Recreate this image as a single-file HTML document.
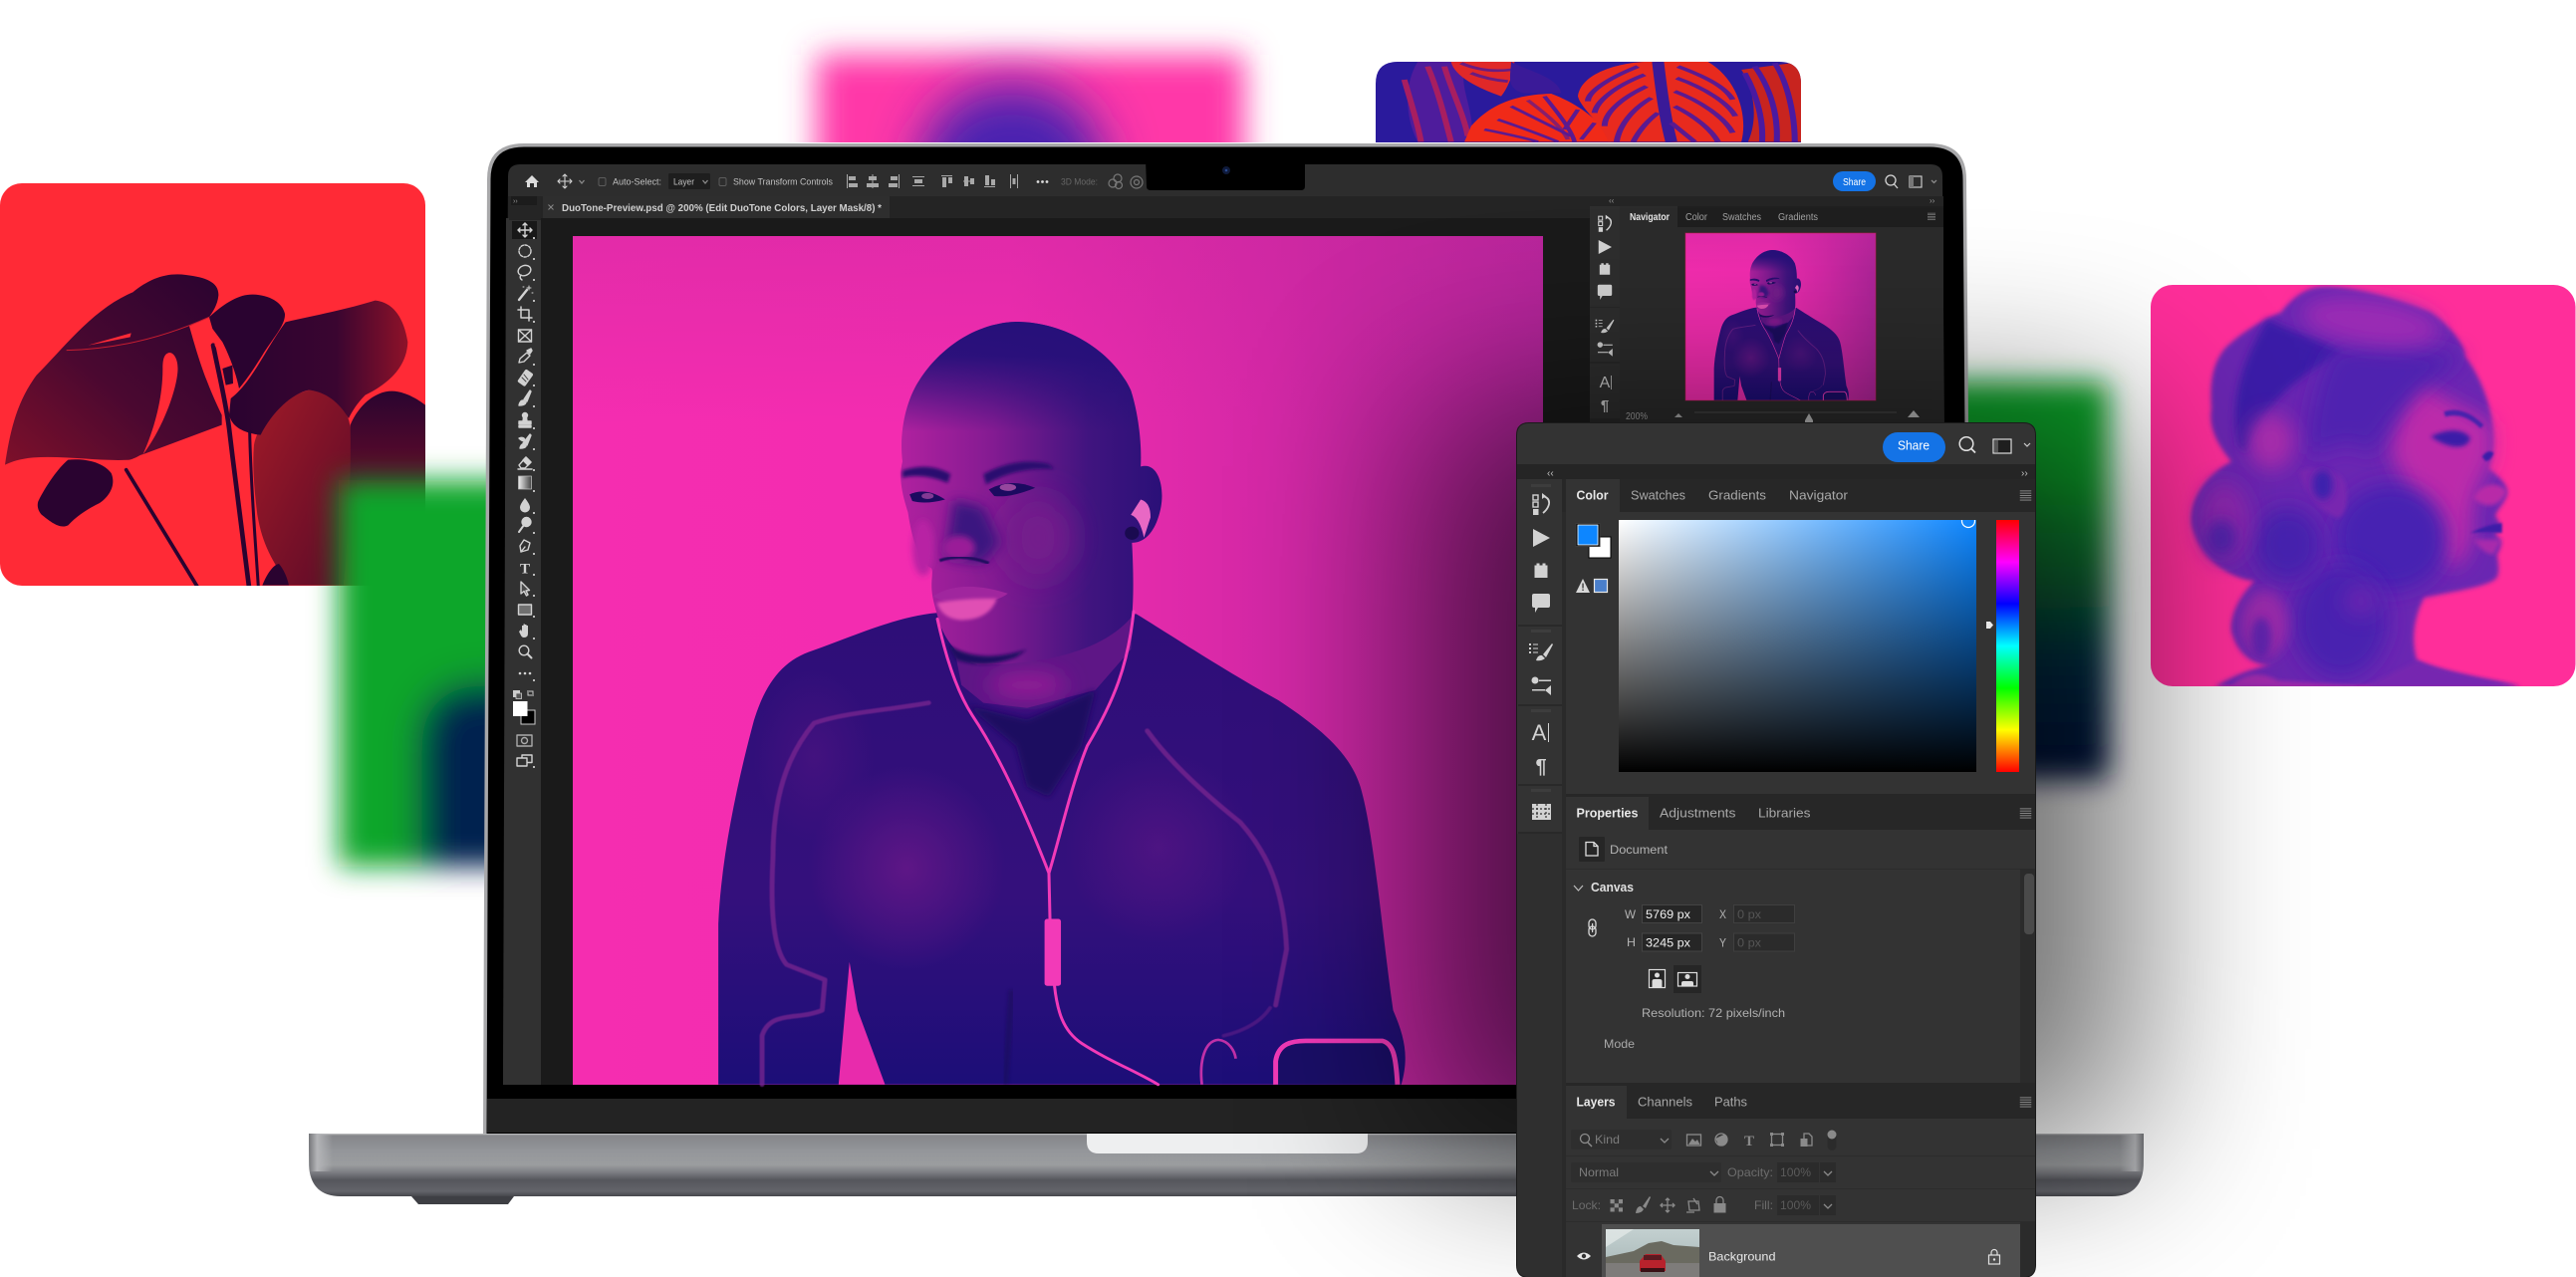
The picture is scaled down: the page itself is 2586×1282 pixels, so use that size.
<!DOCTYPE html>
<html lang="en">
<head>
<meta charset="utf-8">
<title>Photoshop Duotone</title>
<style>
html,body{margin:0;padding:0;background:#fff;width:2586px;height:1282px;overflow:hidden}
svg{display:block;position:absolute;left:0;top:0}
text{font-family:"Liberation Sans",sans-serif}
.i{fill:none;stroke:#d2d2d2;stroke-width:1.4;stroke-linecap:round;stroke-linejoin:round}
.f{fill:#d2d2d2;stroke:none}
.d{fill:none;stroke:#8a8a8a;stroke-width:1.3}
.df{fill:#8a8a8a;stroke:none}
</style>
</head>
<body>
<svg width="2586" height="1282" viewBox="0 0 2586 1282" xmlns="http://www.w3.org/2000/svg">
<defs>
<filter id="b1" x="-5%" y="-5%" width="110%" height="110%"><feGaussianBlur stdDeviation="1"/></filter>
<filter id="b3" x="-20%" y="-20%" width="140%" height="140%"><feGaussianBlur stdDeviation="3"/></filter>
<filter id="b6" x="-30%" y="-30%" width="160%" height="160%"><feGaussianBlur stdDeviation="6"/></filter>
<filter id="b12" x="-50%" y="-50%" width="200%" height="200%"><feGaussianBlur stdDeviation="12"/></filter>
<filter id="b20" x="-60%" y="-60%" width="220%" height="220%"><feGaussianBlur stdDeviation="20"/></filter>
<filter id="b30" x="-80%" y="-80%" width="260%" height="260%"><feGaussianBlur stdDeviation="30"/></filter>
<filter id="bc" x="-30%" y="-30%" width="160%" height="160%"><feGaussianBlur stdDeviation="14"/></filter>
<filter id="bt" x="-30%" y="-60%" width="160%" height="220%"><feGaussianBlur stdDeviation="16"/></filter>
<filter id="bd" x="-60%" y="-60%" width="220%" height="220%"><feGaussianBlur stdDeviation="25"/></filter>
<filter id="bs" x="-50%" y="-50%" width="200%" height="200%"><feGaussianBlur stdDeviation="90"/></filter>

<clipPath id="cRed"><rect x="0" y="184" width="427" height="404" rx="22"/></clipPath>
<clipPath id="cWoman"><rect x="2159" y="286" width="426.5" height="403" rx="22"/></clipPath>
<clipPath id="cPlant"><path d="M1381,143V84Q1381,62 1403,62H1786Q1808,62 1808,84V143Z"/></clipPath>
<clipPath id="cPink"><rect x="700" y="0" width="700" height="143"/></clipPath>
<clipPath id="cPick"><rect x="1625" y="522" width="359" height="253"/></clipPath>
<clipPath id="cThumb"><rect x="1612" y="1234" width="94" height="48"/></clipPath>
<clipPath id="cPanel"><path d="M1523,437Q1523,425 1535,425H2031Q2043,425 2043,437V1270Q2043,1282 2031,1282H1535Q1523,1282 1523,1270Z"/></clipPath>
<clipPath id="cGL"><rect x="340" y="482" width="360" height="388"/></clipPath>

<linearGradient id="gGR" x1="0" y1="0" x2="0" y2="1">
<stop offset="0" stop-color="#0AA52A"/><stop offset=".25" stop-color="#0AA02A"/><stop offset=".5" stop-color="#0A6A35"/><stop offset=".7" stop-color="#003048"/><stop offset="1" stop-color="#001040"/></linearGradient>
<linearGradient id="gBase" x1="0" y1="0" x2="0" y2="1">
<stop offset="0" stop-color="#c8c8ca"/><stop offset=".03" stop-color="#85868a"/><stop offset=".28" stop-color="#94969a"/><stop offset=".5" stop-color="#9b9d9f"/><stop offset=".62" stop-color="#7c7d82"/><stop offset=".74" stop-color="#55565c"/><stop offset=".92" stop-color="#63646a"/><stop offset="1" stop-color="#46474c"/></linearGradient>
<linearGradient id="gEndL" x1="0" y1="0" x2="1" y2="0">
<stop offset="0" stop-color="#75767a"/><stop offset=".35" stop-color="#b4b5b8"/><stop offset="1" stop-color="#b4b5b8" stop-opacity="0"/></linearGradient>
<linearGradient id="gEndR" x1="1" y1="0" x2="0" y2="0">
<stop offset="0" stop-color="#75767a"/><stop offset=".35" stop-color="#b4b5b8"/><stop offset="1" stop-color="#b4b5b8" stop-opacity="0"/></linearGradient>

<linearGradient id="gCanvas" x1="0" y1="0" x2="1" y2="0">
<stop offset="0" stop-color="#F52DB0"/><stop offset=".45" stop-color="#F22CB0"/><stop offset=".72" stop-color="#D428A6"/><stop offset="1" stop-color="#AE2499"/></linearGradient>
<linearGradient id="gCanvasTop" x1="0" y1="0" x2="0" y2="1">
<stop offset="0" stop-color="#C8289E" stop-opacity=".4"/><stop offset=".22" stop-color="#C8289E" stop-opacity="0"/></linearGradient>
<linearGradient id="gBody" x1="0" y1="0" x2="0" y2="1">
<stop offset="0" stop-color="#2E0E78"/><stop offset=".6" stop-color="#34107C"/><stop offset="1" stop-color="#1C0E78"/></linearGradient>
<linearGradient id="gHead" x1="0" y1="0" x2="1" y2="0">
<stop offset="0" stop-color="#B0219F"/><stop offset=".35" stop-color="#841B92"/><stop offset=".72" stop-color="#40147F"/><stop offset="1" stop-color="#2A1078"/></linearGradient>
<linearGradient id="gCap" x1="0" y1="0" x2="0" y2="1">
<stop offset="0" stop-color="#26107A"/><stop offset=".1" stop-color="#26107A" stop-opacity=".95"/><stop offset=".2" stop-color="#26107A" stop-opacity=".55"/><stop offset=".32" stop-color="#26107A" stop-opacity="0"/></linearGradient>
<radialGradient id="gChest" cx=".5" cy=".5" r=".5">
<stop offset="0" stop-color="#5E1686"/><stop offset="1" stop-color="#5E1686" stop-opacity="0"/></radialGradient>

<linearGradient id="gLeafR" x1="0" y1="0" x2="1" y2="0">
<stop offset="0" stop-color="#2A0330"/><stop offset=".6" stop-color="#3a0530"/><stop offset="1" stop-color="#8E1229"/></linearGradient>
<linearGradient id="gLeafM" x1="1" y1="0" x2="0" y2="1">
<stop offset="0" stop-color="#2A0330"/><stop offset=".55" stop-color="#4a0830"/><stop offset="1" stop-color="#7E102A"/></linearGradient>
<linearGradient id="gLeafB" x1="0" y1="0" x2="1" y2="1">
<stop offset="0" stop-color="#A01A28"/><stop offset="1" stop-color="#5a0a28"/></linearGradient>
<linearGradient id="gLeaf5" x1="0" y1="0" x2="0" y2="1">
<stop offset="0" stop-color="#2A0430"/><stop offset=".4" stop-color="#5a0a2a"/><stop offset="1" stop-color="#7a1028"/></linearGradient>

<linearGradient id="gPickH" x1="0" y1="0" x2="1" y2="0"><stop offset="0" stop-color="#fff"/><stop offset="1" stop-color="#0D86FF"/></linearGradient>
<linearGradient id="gPickV" x1="0" y1="0" x2="0" y2="1"><stop offset="0" stop-color="#000" stop-opacity="0"/><stop offset="1" stop-color="#000"/></linearGradient>
<linearGradient id="gHue" x1="0" y1="0" x2="0" y2="1">
<stop offset="0" stop-color="#f00"/><stop offset=".167" stop-color="#f0f"/><stop offset=".333" stop-color="#00f"/><stop offset=".5" stop-color="#0ff"/><stop offset=".667" stop-color="#0f0"/><stop offset=".833" stop-color="#ff0"/><stop offset="1" stop-color="#f00"/></linearGradient>
<linearGradient id="gGrad" x1="0" y1="0" x2="1" y2="0"><stop offset="0" stop-color="#eee"/><stop offset="1" stop-color="#444"/></linearGradient>
<linearGradient id="gSky" x1="0" y1="0" x2="0" y2="1"><stop offset="0" stop-color="#c3d0d0"/><stop offset="1" stop-color="#a5b4b4"/></linearGradient>

<g id="manArt">
  <rect x="575" y="237" width="974" height="852" fill="url(#gCanvas)"/>
  <rect x="575" y="237" width="974" height="852" fill="url(#gCanvasTop)"/>
  <g transform="translate(680,300) scale(.5485,.5102)">
    <path fill="url(#gBody)" d="M75,1546L75,1230C80,1100 110,950 140,830C160,760 190,715 240,695C320,665 400,625 475,618L540,720L830,620L840,620C900,660 1000,730 1100,790C1170,840 1230,890 1250,960C1275,1050 1290,1250 1310,1400C1330,1450 1340,1490 1325,1546Z"/>
    <ellipse cx="420" cy="1120" rx="180" ry="200" fill="url(#gChest)"/>
    <ellipse cx="880" cy="1080" rx="170" ry="190" fill="url(#gChest)" opacity=".6"/>
    <ellipse cx="250" cy="900" rx="110" ry="170" fill="url(#gChest)" opacity=".4"/>
    <path d="M315,1305L330,1400L380,1546L295,1546Z" fill="#E82BAC"/>
    <path d="M500,650L835,620L830,690L765,770L640,805L560,795L520,760Z" fill="#5E1686"/>
    <ellipse cx="640" cy="760" rx="70" ry="30" fill="#8E1C94" filter="url(#b20)"/>
    <path d="M530,800L640,828L765,770L740,880L680,980L640,960L620,880Z" fill="#1E0C60" filter="url(#b6)"/>
    <path fill="url(#gHead)" d="M470,600C460,560 470,540 465,530C445,520 430,480 422,420C410,380 405,350 412,320C405,260 420,200 440,165C480,95 550,45 625,45C720,48 800,110 830,180C845,230 850,290 848,330C880,320 892,370 885,410C878,450 860,480 832,480C835,540 835,590 832,625C790,680 700,720 550,720C520,710 495,680 480,640Z"/>
    <path fill="url(#gCap)" d="M470,600C460,560 470,540 465,530C445,520 430,480 422,420C410,380 405,350 412,320C405,260 420,200 440,165C480,95 550,45 625,45C720,48 800,110 830,180C845,230 850,290 848,330C880,320 892,370 885,410C878,450 860,480 832,480C835,540 835,590 832,625C790,680 700,720 550,720C520,710 495,680 480,640Z"/>
    <ellipse cx="660" cy="470" rx="60" ry="80" fill="#741A8C" filter="url(#b30)"/>
    <ellipse cx="450" cy="490" rx="20" ry="55" fill="#B823A4" filter="url(#b6)"/>
    <path d="M505,395L560,410L590,480L560,520L490,510Z" fill="#3A1280" filter="url(#b12)"/>
    <ellipse cx="515" cy="490" rx="30" ry="24" fill="#9A1E98" filter="url(#b6)"/>
    <path d="M480,515Q520,500 570,520" stroke="#200A60" stroke-width="6" fill="none" filter="url(#b1)"/>
    <path d="M412,338Q460,320 500,345L495,362Q450,342 412,352Z" fill="#2A0E70" filter="url(#b3)"/>
    <path d="M560,345Q620,310 680,325L690,335Q620,330 565,365Z" fill="#2A0E70" filter="url(#b3)"/>
    <path d="M425,385Q455,370 490,395Q455,405 430,398Z" fill="#1C0A60"/>
    <ellipse cx="458" cy="388" rx="11" ry="6" fill="#D860C0" opacity=".55"/>
    <path d="M570,375Q610,352 655,372Q610,392 580,388Z" fill="#1C0A60"/>
    <ellipse cx="605" cy="371" rx="15" ry="7" fill="#E870C8" opacity=".6"/>
    <path d="M468,585Q520,550 605,580Q580,600 530,598Q490,600 468,585Z" fill="#A0269E"/>
    <path d="M475,598Q530,588 585,590Q570,632 520,632Q485,630 475,598Z" fill="#E04FB4" filter="url(#b3)"/>
    <path d="M495,680Q550,720 640,690L620,705Q560,730 510,710Z" fill="#1E0A60" filter="url(#b3)"/>
    <path d="M848,395Q866,400 866,430L854,470Q846,430 830,425Z" fill="#E868C4"/>
    <circle cx="832" cy="461" r="13" fill="#1A0A50"/>
    <g fill="none" stroke="#7A2690" stroke-width="9" stroke-linecap="round" stroke-linejoin="round" opacity=".75" filter="url(#b1)">
      <path d="M460,795C380,810 300,815 250,835C200,900 175,980 175,1100C170,1200 175,1280 200,1310L270,1340L265,1400C220,1420 170,1400 155,1450L155,1546"/>
      <path d="M860,850C900,910 960,970 1030,1030C1080,1090 1110,1160 1115,1280L1095,1390"/>
      <path d="M1000,1450C1040,1440 1070,1420 1085,1395" stroke-width="7" opacity=".6"/>
    </g>
    <g fill="none" stroke="#F23AB8" stroke-width="5.500" stroke-linecap="round" stroke-linejoin="round">
      <path d="M476,630C490,700 510,770 540,820C590,900 640,1020 680,1130"/>
      <path d="M835,615C825,720 800,790 750,880C720,960 700,1060 680,1130L682,1225"/>
      <path d="M690,1350C695,1400 705,1440 740,1465C790,1500 840,1520 880,1546"/>
    </g>
    <rect x="672" y="1220" width="30" height="132" rx="5" fill="#F23AB8"/>
    <path d="M1095,1546L1095,1500C1100,1465 1125,1460 1150,1460L1290,1460C1310,1465 1315,1490 1318,1546Z" fill="#1A0E68"/>
    <path d="M1095,1546L1095,1500C1100,1465 1125,1460 1150,1460L1290,1460C1310,1465 1315,1490 1318,1546" fill="none" stroke="#F23AB8" stroke-width="9"/>
    <path d="M960,1546C955,1500 965,1460 990,1458C1010,1460 1020,1480 1022,1495" fill="none" stroke="#C030A8" stroke-width="5"/>
    <path d="M600,1546L612,1360" fill="none" stroke="#12084e" stroke-width="12" opacity=".4" filter="url(#b3)"/>
  </g>
</g>

<g id="ih"><rect x="-8" y="-10" width="5" height="5" fill="none" stroke="#d2d2d2" stroke-width="1.4"/><rect x="-8" y="-3" width="5" height="5" fill="none" stroke="#d2d2d2" stroke-width="1.4"/><rect x="-8" y="4" width="5.500" height="6" fill="#d2d2d2"/><path d="M2,-9Q9,-7 8,-1Q7,4 2,8" fill="none" stroke="#d2d2d2" stroke-width="1.800"/><path d="M1,-12L1,-6L5,-9Z" fill="#d2d2d2"/></g>
<g id="ip"><path d="M-8,-9L9,0L-8,9Z" fill="#d2d2d2"/></g>
<g id="il"><path d="M-6.500,-3V-6.500H-4.500V-8.500H-1.500V-6.500H1.500V-8.500H4.500V-6.500H6.500V6H-6.500Z" fill="#d2d2d2"/></g>
<g id="ic"><path d="M-9,-7Q-9,-9 -7,-9H7Q9,-9 9,-7V3Q9,5 7,5H-3L-6,10L-6,5H-7Q-9,5 -9,3Z" fill="#d2d2d2"/></g>
<g id="ib"><path d="M2,3L11,-8L12,-7L5,6Z" fill="#d2d2d2"/><path d="M-5,9Q-3,3 1,4L4,7Q0,10 -5,9Z" fill="#d2d2d2"/><path d="M-12,-8h2v2h-2zM-12,-4h2v2h-2zM-12,0h2v2h-2zM-8,-7.500h5v1h-5zM-8,-3.500h5v1h-5zM-8,.5h5v1h-5z" fill="#d2d2d2"/></g>
<g id="is"><circle cx="-6" cy="-5" r="3.500" fill="#d2d2d2"/><path d="M-2,-5.500H10V-4H-2ZM-9,4H4V5.500H-9Z" fill="#d2d2d2"/><path d="M4,5L10,0V10Z" fill="#d2d2d2"/></g>
<g id="ih2" fill="#8e8e8e"><rect x="-5" y="-4" width="10" height=".8"/><rect x="-5" y="-2" width="10" height=".8"/><rect x="-5" y="0" width="10" height=".8"/><rect x="-5" y="2" width="10" height=".8"/><rect x="-5" y="4" width="10" height=".8"/></g>
</defs>

<rect width="2586" height="1282" fill="#fff"/>

<!-- blurred pink card top -->
<g clip-path="url(#cPink)">
  <rect x="820" y="55" width="429" height="170" fill="#FF38A8" filter="url(#bt)"/>
  <ellipse cx="1016" cy="165" rx="92" ry="80" fill="#4A22B0" filter="url(#bd)"/>
</g>
<!-- plant card top -->
<g clip-path="url(#cPlant)">
  <rect x="1381" y="62" width="427" height="82" fill="#2A1A9C"/>
  <g transform="translate(780,30) scale(.67,.3333)">
    <path d="M960,96L1040,96C1010,140 1050,240 1040,337L960,337C940,260 940,160 960,96Z" fill="#4E1C9C"/>
    <g fill="none" stroke="#A81E60" stroke-width="9"><path d="M975,110C990,180 1000,260 1010,337"/><path d="M1000,110C1010,180 1030,260 1035,320"/><path d="M940,150C950,220 960,280 965,337"/></g>
    <path d="M1010,96L1105,96C1104,130 1095,175 1085,200C1050,175 1015,140 1010,96Z" fill="#E02828"/>
    <path d="M1025,100Q1060,130 1100,120M1040,130Q1065,150 1095,155" stroke="#6A1C80" stroke-width="8" fill="none"/>
    <path d="M1040,290C1070,220 1110,195 1160,192C1210,230 1240,290 1250,337L1030,337Z" fill="#F02A18"/>
    <g fill="none" stroke="#5B1A90" stroke-width="7"><path d="M1150,200C1170,250 1190,300 1195,337"/><path d="M1100,230C1130,260 1170,300 1190,320"/><path d="M1080,270C1110,290 1150,320 1170,337"/><path d="M1060,300C1085,310 1120,325 1140,337"/><path d="M1200,240L1180,300M1225,280L1205,330"/><path d="M1125,212C1150,250 1175,290 1185,330" opacity=".7"/></g>
    <path d="M1100,96C1120,120 1170,140 1175,190L1120,190C1090,180 1100,130 1100,96Z" fill="#3A1A98"/>
    <path d="M1200,200C1205,130 1260,100 1300,96L1395,96C1440,150 1455,260 1445,337L1245,337C1240,290 1205,240 1200,200Z" fill="#E82A1E"/>
    <g fill="none" stroke="#5B1A90" stroke-width="9">
      <path d="M1320,96C1325,180 1330,260 1340,337" stroke-width="18" stroke="#3A1A98"/>
      <path d="M1290,110C1240,150 1215,190 1215,215M1300,135C1255,170 1228,215 1225,250M1303,170C1265,205 1240,250 1240,290M1310,205C1280,240 1262,290 1258,337M1320,250C1300,280 1290,310 1283,337"/>
      <path d="M1350,110C1390,140 1420,170 1432,210M1348,145C1390,175 1425,220 1436,260M1345,185C1385,215 1420,265 1432,310M1345,230C1375,260 1400,300 1410,337M1340,280L1375,337"/>
    </g>
    <path d="M1445,120L1535,96V337H1455C1470,270 1465,180 1445,120Z" fill="#C8241F"/>
    <g fill="none" stroke="#4A1AA0" stroke-width="9"><path d="M1465,110C1490,180 1500,260 1498,337"/><path d="M1495,100C1515,160 1525,260 1525,337"/><path d="M1450,130C1470,200 1478,280 1476,337"/></g>
  </g>
</g>

<!-- red plant card -->
<g clip-path="url(#cRed)">
  <rect x="0" y="184" width="427" height="404" fill="#FF2A36"/>
  <g transform="translate(0,170) scale(.33333)">
    <path fill="url(#gLeaf5)" d="M1055,770C1080,710 1130,668 1180,668C1230,668 1281,710 1281,710V1253H1035C1045,1100 1050,950 1055,770Z"/>
    <path fill="url(#gLeafB)" d="M765,830C775,770 840,690 930,665C1000,670 1050,720 1055,780C1058,900 1050,1080 1035,1253H870C820,1180 790,1130 775,1040C765,960 760,890 765,830Z"/>
    <path fill="url(#gLeafR)" d="M695,690C760,640 800,540 860,460C950,440 1050,420 1130,395C1180,400 1215,440 1228,520C1225,590 1180,640 1100,680C1075,705 1060,730 1050,750C1020,700 980,670 930,665C880,675 820,730 785,800C740,795 700,780 690,740Z"/>
    <path fill="#2A0330" d="M630,445C680,400 720,377 760,377C810,378 850,400 858,435C860,470 820,510 790,560C765,600 745,630 720,660C710,610 690,560 670,520L640,480Z"/>
    <path fill="url(#gLeafM)" d="M15,890C30,790 50,700 110,620C190,540 280,420 400,370C450,330 500,310 560,318C620,325 660,340 658,380C655,410 640,430 630,445C600,455 585,465 570,472C590,540 610,620 668,740L668,770L432,858C420,860 410,870 390,875C300,880 200,862 100,868C60,872 35,880 15,890Z"/>
    <path fill="#FF2A36" d="M510,552C525,552 538,575 535,610C530,670 490,780 430,860C470,770 490,680 490,600C490,570 495,555 510,552Z"/>
    <path fill="#FF2A36" d="M265,530L395,493L392,505Q320,520 265,530Z"/>
    <path fill="none" stroke="#C81E30" stroke-width="3" d="M200,545Q420,540 630,445"/>
    <path fill="#2A0330" d="M115,1000C140,950 175,900 205,875C250,870 310,880 335,915C350,950 330,985 300,1005C270,1020 235,1040 205,1072C180,1085 150,1060 125,1040C112,1025 112,1010 115,1000Z"/>
    <g fill="none" stroke="#2A0330" stroke-linecap="round">
      <path d="M380,905L595,1258" stroke-width="11"/>
      <path d="M642,530C660,620 680,700 690,780C710,950 735,1130 750,1258" stroke-width="14"/>
      <path d="M752,790C755,950 770,1130 778,1258" stroke-width="9"/>
    </g>
    <path fill="#FF2A36" d="M645,525C680,550 700,600 695,620C680,600 660,560 645,525Z"/>
    <path fill="#2A0330" d="M670,600L700,590L702,645L680,650Z"/>
    <path fill="#2A0330" d="M790,1253C805,1215 825,1190 840,1188C855,1205 865,1230 870,1253Z"/>
  </g>
</g>

<!-- green blurred cards behind laptop -->
<g filter="url(#bc)">
  <g clip-path="url(#cGL)">
    <rect x="340" y="482" width="360" height="388" fill="#0CA62C"/>
    <rect x="425" y="690" width="300" height="240" rx="50" fill="#002050" filter="url(#b12)"/>
  </g>
</g>
<rect x="1850" y="383" width="267" height="400" rx="10" fill="url(#gGR)" filter="url(#bc)"/>

<!-- laptop base -->
<path d="M310,1138H2152V1170Q2150,1201 2120,1201H342Q312,1201 310,1170Z" fill="url(#gBase)"/>
<path d="M310,1138H334V1176H311Q310,1160 310,1138Z" fill="url(#gEndL)"/>
<path d="M2152,1138H2128V1176H2151Q2152,1160 2152,1138Z" fill="url(#gEndR)"/>
<path d="M413,1201H516L510,1209H420Z" fill="#3e3f44"/>
<path d="M1091,1138H1373V1146Q1373,1158 1361,1158H1103Q1091,1158 1091,1146Z" fill="#EEEFF0"/>

<!-- lid -->
<path d="M489,180Q489,144 526,144H1937Q1974,144 1974,180L1982,1138H485Z" fill="#a8a8aa"/>
<path d="M492.500,180Q492.500,147.500 526,147.500H1937Q1970.500,147.500 1970.500,180L1978,1138H488.500Z" fill="#000"/>
<rect x="489" y="1103" width="1489" height="34" fill="#232323"/>

<!-- screen UI -->
<path d="M510,177Q510,165 522,165H1938Q1950,165 1950,177L1957,1089H505Z" fill="#2d2d2d"/>
<rect x="510" y="197" width="1441" height="40" fill="#242424"/>
<rect x="543" y="219" width="1053" height="870" fill="#1a1a1a"/>
<path d="M508,219H543V1089H505Z" fill="#313131"/>
<rect x="511" y="197" width="32" height="24" fill="#252525"/>
<rect x="513" y="197" width="26" height="9" fill="#1c1c1c"/>
<rect x="545" y="197" width="348" height="22" fill="#2e2e2e"/>
<rect x="1626" y="207" width="325" height="880" fill="#2b2b2b"/>
<rect x="1596" y="207" width="30" height="880" fill="#282828"/>
<rect x="1596" y="207" width="30" height="101" fill="#2e2e2e"/>
<rect x="1596" y="309" width="30" height="54" fill="#2e2e2e"/>
<rect x="1596" y="365" width="30" height="55" fill="#2e2e2e"/>
<rect x="1629" y="207" width="322" height="21" fill="#1f1f1f"/>
<rect x="1629" y="207" width="55" height="21" fill="#2b2b2b"/>

<!-- notch -->
<path d="M1150,160H1310V187Q1310,191 1306,191H1155Q1151,191 1151,187Z" fill="#000"/>
<circle cx="1231" cy="171" r="4" fill="#0f1a3a"/><circle cx="1231" cy="171" r="1.300" fill="#2a4a90"/>

<!-- main canvas -->
<use href="#manArt"/>

<!-- options bar -->
<g>
  <path d="M527,183L534,176L541,183H539V188H536V184H532V188H529V183Z" fill="#dcdcdc"/>
  <g transform="translate(567,182)" class="i"><path d="M-7,0H7M0,-7V7M-2,-5L0,-7L2,-5M-2,5L0,7L2,5M-5,-2L-7,0L-5,2M5,-2L7,0L5,2" stroke-width="1.100"/></g>
  <path d="M581.500,181L584,184L586.500,181" class="d"/>
  <rect x="601" y="178.500" width="7" height="8" rx="1.500" fill="none" stroke="#5c5c5c"/>
  <text x="615" y="185.500" font-size="9.500" fill="#c0c0c0" textLength="49" lengthAdjust="spacingAndGlyphs">Auto-Select:</text>
  <rect x="671" y="174" width="42" height="16" rx="1.500" fill="#1e1e1e"/>
  <text x="676" y="185.500" font-size="9.500" fill="#c0c0c0" textLength="21" lengthAdjust="spacingAndGlyphs">Layer</text>
  <path d="M705.500,181L708,184L710.500,181" class="d"/>
  <rect x="722" y="178.500" width="7" height="8" rx="1.500" fill="none" stroke="#5c5c5c"/>
  <text x="736" y="185.500" font-size="9.500" fill="#c0c0c0" textLength="100" lengthAdjust="spacingAndGlyphs">Show Transform Controls</text>
  <g fill="#a8a8a8">
    <path d="M850,175h1v14h-1zM852,177h7v4h-7zM852,184h9v4h-9z"/>
    <path d="M875.500,175h1v14h-1zM872,177h8v4h-8zM870,184h12v4h-12z"/>
    <path d="M902,175h1v14h-1zM894,177h7v4h-7zM892,184h9v4h-9z"/>
    <path d="M916,177h12v1h-12zM918,180h8v4h-8zM916,186h12v1h-12z"/>
    <path d="M945,176h11v1h-11zM946,178h4v10h-4zM952,178h4v6h-4z"/>
    <path d="M967,181.500h11v1h-11zM968,177h4v10h-4zM974,179h4v6h-4z"/>
    <path d="M988,187h11v1h-11zM989,176h4v10h-4zM995,180h4v6h-4z"/>
    <path d="M1014,175h1v14h-1zM1021,175h1v14h-1zM1016.500,179h3v6h-3z"/>
  </g>
  <circle cx="1042" cy="182.500" r="1.400" fill="#ddd"/><circle cx="1046.500" cy="182.500" r="1.400" fill="#ddd"/><circle cx="1051" cy="182.500" r="1.400" fill="#ddd"/>
  <text x="1065" y="185.500" font-size="9.500" fill="#666" textLength="37" lengthAdjust="spacingAndGlyphs">3D Mode:</text>
  <g fill="none" stroke="#777" stroke-width="1.200"><circle cx="1117" cy="184" r="4"/><circle cx="1122" cy="179" r="4"/><circle cx="1123" cy="186" r="3.500"/><circle cx="1141" cy="183" r="6"/><circle cx="1141" cy="183" r="2.500"/></g>
  <!-- right of notch -->
  <rect x="1840" y="172" width="43" height="20" rx="10" fill="#1473E6"/>
  <text x="1850" y="186" font-size="10" fill="#fff" textLength="23" lengthAdjust="spacingAndGlyphs">Share</text>
  <circle cx="1898" cy="181" r="5" fill="none" stroke="#d5d5d5" stroke-width="1.300"/><path d="M1901.500,185L1905,189" stroke="#d5d5d5" stroke-width="1.300"/>
  <rect x="1917" y="177" width="12" height="11" fill="none" stroke="#c8c8c8" stroke-width="1.200"/><rect x="1917" y="177" width="4" height="11" fill="#777"/>
  <path d="M1939,181L1941.500,183.500L1944,181" class="d"/>
</g>

<!-- doc tab -->
<path d="M550.500,205.500L555.500,210.500M555.500,205.500L550.500,210.500" stroke="#888" stroke-width="1"/>
<text x="564" y="212" font-size="9.800" font-weight="bold" fill="#cfcfcf" textLength="321" lengthAdjust="spacingAndGlyphs">DuoTone-Preview.psd @ 200% (Edit DuoTone Colors, Layer Mask/8) *</text>
<text x="515" y="204" font-size="7" fill="#999">››</text>
<text x="1615" y="204" font-size="8" fill="#999">‹‹</text>
<text x="1937" y="204" font-size="8" fill="#999">››</text>

<!-- tools -->
<rect x="514" y="222" width="25" height="18" fill="#181818"/>
<g class="i" stroke-width="1.200">
  <g transform="translate(527,231)"><path d="M-7,0H7M0,-7V7M-2,-5L0,-7L2,-5M-2,5L0,7L2,5M-5,-2L-7,0L-5,2M5,-2L7,0L5,2"/></g>
  <g transform="translate(527,252)"><circle r="6" stroke-dasharray="2.500 1.500"/></g>
  <g transform="translate(527,273)"><ellipse cy="-1.500" rx="6.500" ry="5" transform="rotate(-20)"/><path d="M-4,3Q-6,6 -3,8"/></g>
  <g transform="translate(527,294)"><path d="M-6,7L2,-3" stroke-width="2.400"/><path d="M4,-7V-3M2,-5H6M7,0h1M-2,-6h1" stroke-width="1"/></g>
  <g transform="translate(527,315)"><path d="M-4,-7V4H7M-7,-4H4V7" stroke-width="1.500"/></g>
  <g transform="translate(527,337)"><rect x="-6.500" y="-6" width="13" height="12"/><path d="M-6.500,-6L6.500,6M6.500,-6L-6.500,6"/></g>
  <g transform="translate(527,357)"><path d="M-6,7L-5,3L2,-3L5,0L-1,6Z"/><path d="M2,-5L6,-7L7,-5L5,-2Z" fill="#d2d2d2"/></g>
  <g transform="translate(527,379)"><rect x="-3.500" y="-7" width="8" height="14" rx="1" transform="rotate(35)" fill="#d2d2d2"/><path d="M-1,-3L3,2M-3,0L1,4" stroke="#444" stroke-width="1"/></g>
  <g transform="translate(527,400)"><path d="M-1,1L5,-8L6,-7L2,3Z" fill="#d2d2d2"/><path d="M-6,7Q-5,2 -2,2L1,4Q0,7 -6,7Z" fill="#d2d2d2"/></g>
  <g transform="translate(527,422)"><circle cy="-5" r="2.500" fill="#d2d2d2"/><path d="M-1.500,-3H1.500L2,1H6V4H-6V1H-2Z" fill="#d2d2d2"/><rect x="-6" y="5.500" width="12" height="1.500" fill="#d2d2d2"/></g>
  <g transform="translate(527,443)"><path d="M-2,2L5,-7L6,-6L2,4Z" fill="#d2d2d2"/><path d="M-6,-3Q-1,-5 0,-1Q-2,1 -6,-3ZM-5,7Q-4,3 -2,3L1,5Q0,7 -5,7Z" fill="#d2d2d2"/></g>
  <g transform="translate(527,464)"><path d="M-6,3L1,-5L6,0L0,6H-4Z" /><path d="M1,-5L6,0L3,3L-2,-2Z" fill="#d2d2d2"/><path d="M-7,7H7"/></g>
  <rect x="520.500" y="478" width="13" height="13" fill="url(#gGrad)" stroke="#bbb" stroke-width=".8"/>
  <g transform="translate(527,507)"><path d="M0,-7C3,-3 5,0 5,2.500A5,5 0 0 1 -5,2.500C-5,0 -3,-3 0,-7Z" fill="#d2d2d2" stroke="none"/></g>
  <g transform="translate(527,527)"><circle cx="1.500" cy="-3" r="4.500" fill="#d2d2d2"/><path d="M-1,0L-6,7" stroke-width="2"/></g>
  <g transform="translate(527,548)"><path d="M-1,-6L5,-3L3,4L-4,6L-5,0Z"/><path d="M-4,6L0,1"/></g>
  <g transform="translate(527,591)"><path d="M-4,-7L-4,5L-1,2.500L1.500,7L3,6L1,2L4.500,1.500Z" fill="#4a4a4a"/></g>
  <g transform="translate(527,612)"><rect x="-6.500" y="-5" width="13" height="10" fill="#707070"/></g>
  <g transform="translate(527,633)"><path d="M-6,1L-4,-1L-3,1V-5H-1.500V0V-6.500H0V0V-6H1.500V0V-5H3V3Q3,7 -1,7Q-3,7 -4,5Z" fill="#d2d2d2" stroke="none"/></g>
  <g transform="translate(527,654)"><circle cx="-1" cy="-1" r="4.800"/><path d="M2.500,2.500L6.500,6.500" stroke-width="2"/></g>
  <g transform="translate(519,738)"><rect x="0" y="0" width="15" height="11" stroke="#aaa"/><circle cx="7.500" cy="5.500" r="3" stroke="#aaa"/></g>
  <g transform="translate(519,758)"><rect x="5" y="0" width="10" height="7.500"/><rect x="0" y="3" width="10" height="8" fill="#313131"/></g>
</g>
<g fill="#d2d2d2"><circle cx="522" cy="676" r="1.300"/><circle cx="527" cy="676" r="1.300"/><circle cx="532" cy="676" r="1.300"/></g>
<text x="527" y="575.500" font-size="15" font-weight="bold" fill="#d2d2d2" text-anchor="middle" style="font-family:'Liberation Serif',serif">T</text>
<g fill="#bbb"><path d="M535,238h2v2h-2zM535,259h2v2h-2zM535,280h2v2h-2zM535,301h2v2h-2zM535,322h2v2h-2zM535,365h2v2h-2zM535,386h2v2h-2zM535,407h2v2h-2zM535,429h2v2h-2zM535,450h2v2h-2zM535,471h2v2h-2zM535,492h2v2h-2zM535,514h2v2h-2zM535,534h2v2h-2zM535,555h2v2h-2zM535,576h2v2h-2zM535,597h2v2h-2zM535,618h2v2h-2zM535,640h2v2h-2zM535,682h2v2h-2zM535,769h2v2h-2z"/></g>
<rect x="515" y="693" width="7" height="7" fill="#ccc"/><rect x="518" y="696" width="5.500" height="5.500" fill="#555" stroke="#ccc" stroke-width=".8"/>
<path d="M530,693V698H534M535,699V694H531" fill="none" stroke="#ccc" stroke-width="1"/>
<rect x="523" y="713" width="14" height="14" fill="#000" stroke="#ccc" stroke-width="1"/>
<rect x="515" y="704" width="14.500" height="15" fill="#fff"/>

<!-- navigator dock -->
<g transform="translate(1611,225) scale(.78)"><use href="#ih"/></g>
<g transform="translate(1611,248) scale(.78)"><use href="#ip"/></g>
<g transform="translate(1611,271) scale(.8)"><use href="#il"/></g>
<g transform="translate(1611,293) scale(.8)"><use href="#ic"/></g>
<g transform="translate(1611,327) scale(.78)"><use href="#ib"/></g>
<g transform="translate(1611,350) scale(.78)"><use href="#is"/></g>
<text x="1611" y="389" font-size="16" fill="#c8c8c8" text-anchor="middle">A</text>
<rect x="1617" y="377" width=".8" height="14" fill="#c8c8c8"/>
<text x="1611" y="412" font-size="15" font-weight="bold" fill="#c8c8c8" text-anchor="middle">¶</text>

<!-- navigator panel -->
<text x="1636" y="221" font-size="10" font-weight="bold" fill="#e6e6e6" textLength="40" lengthAdjust="spacingAndGlyphs">Navigator</text>
<text x="1692" y="221" font-size="10" fill="#a2a2a2" textLength="22" lengthAdjust="spacingAndGlyphs">Color</text>
<text x="1729" y="221" font-size="10" fill="#a2a2a2" textLength="39" lengthAdjust="spacingAndGlyphs">Swatches</text>
<text x="1785" y="221" font-size="10" fill="#a2a2a2" textLength="40" lengthAdjust="spacingAndGlyphs">Gradients</text>
<g transform="translate(1939,217) scale(.8)"><use href="#ih2"/></g>
<svg x="1692" y="234" width="191" height="168" viewBox="575 237 974 852" preserveAspectRatio="none"><use href="#manArt"/></svg>
<rect x="1692" y="234" width="191" height="168" fill="none" stroke="#c02050" stroke-width=".8" opacity=".7"/>
<text x="1632" y="421" font-size="10" fill="#a2a2a2" textLength="22" lengthAdjust="spacingAndGlyphs">200%</text>
<path d="M1681,419L1685,415L1689,419Z" fill="#aaa"/>
<rect x="1701" y="413" width="203" height="2" fill="#3c3c3c"/>
<path d="M1816,415L1820,422V425H1812V422Z" fill="#bbb"/>
<path d="M1915,419L1921,412L1927,419Z" fill="#bbb"/>

<!-- woman card -->
<g clip-path="url(#cWoman)">
  <rect x="2159" y="286" width="427" height="403" fill="#FF2E9A"/>
  <g transform="translate(2140,270) scale(.33333)">
    <path d="M560,55C650,45 800,90 900,130C960,170 1005,230 1005,265C1050,320 1085,420 1088,480C1092,530 1090,560 1075,600C1110,630 1135,650 1130,680C1120,710 1100,725 1095,745C1110,760 1115,780 1095,800C1115,815 1118,830 1100,860C1105,890 1110,920 1095,935C1060,960 950,975 880,990C850,1050 840,1120 860,1180C950,1220 1100,1240 1170,1258H250C300,1230 350,1205 430,1190C380,1200 320,1170 300,1090C295,1040 330,980 370,940C280,930 200,860 180,770C170,700 220,620 300,580C260,530 230,480 240,420C235,350 240,290 280,240C330,190 400,150 450,130C480,90 520,60 560,55Z" fill="#6A25B2" filter="url(#b6)"/>
    <path d="M860,330C940,400 1060,440 1085,470C1095,540 1085,590 1070,610C1040,650 1020,720 1025,790C1020,840 1000,890 960,900C900,830 860,700 780,560C790,460 820,380 860,330Z" fill="#BC2AAA" filter="url(#b30)"/>
    <ellipse cx="780" cy="810" rx="170" ry="160" fill="#4620B2" filter="url(#b30)"/>
    <ellipse cx="630" cy="1060" rx="140" ry="170" fill="#4A20B0" filter="url(#b30)"/>
    <ellipse cx="470" cy="830" rx="100" ry="110" fill="#4620B0" filter="url(#b30)"/>
    <ellipse cx="690" cy="1000" rx="50" ry="45" fill="#7826B0" filter="url(#b30)" opacity=".7"/>
    <path d="M320,530C295,400 330,280 410,150C470,190 560,200 640,250C520,310 390,400 345,555Z" fill="#3A1CA8" filter="url(#b12)"/>
    <path d="M600,250C660,210 820,230 1000,260C920,330 800,400 720,560C650,480 580,560 540,560C520,480 560,320 600,250Z" fill="#5023B0" filter="url(#b30)"/>
    <ellipse cx="720" cy="160" rx="210" ry="70" fill="#9A2AB4" filter="url(#b30)" transform="rotate(8 720 160)"/>
    <ellipse cx="420" cy="520" rx="70" ry="85" fill="#B82EAC" filter="url(#b30)" opacity=".8"/>
    <ellipse cx="280" cy="760" rx="75" ry="120" fill="#8C28AE" filter="url(#b30)"/>
    <ellipse cx="270" cy="810" rx="45" ry="55" fill="#4420AC" filter="url(#b20)" opacity=".8"/>
    <ellipse cx="400" cy="1070" rx="70" ry="100" fill="#9A2AAC" filter="url(#b20)"/>
    <ellipse cx="390" cy="1110" rx="30" ry="60" fill="#4A20AE" filter="url(#b12)" opacity=".7"/>
    <path d="M505,610C540,590 620,600 640,640C655,680 650,740 620,750C570,730 520,680 505,610Z" fill="#7826B0" filter="url(#b6)"/>
    <ellipse cx="575" cy="650" rx="30" ry="45" fill="#3E20AE" filter="url(#b12)"/>
    <path d="M900,505C950,480 1000,480 1020,510C1010,545 960,545 900,505Z" fill="#3A1CA8" filter="url(#b6)"/>
    <path d="M940,430Q1000,410 1060,470L1050,480Q1000,430 945,445Z" fill="#4620AC" filter="url(#b3)"/>
    <path d="M1055,565Q1075,540 1090,555Q1080,580 1065,578Z" fill="#3A1CA8" filter="url(#b3)"/>
    <path d="M1030,690C1050,640 1110,640 1130,670C1115,710 1070,730 1030,690Z" fill="#B82AA8" filter="url(#b6)"/>
    <path d="M1020,795Q1070,770 1115,765L1115,795Q1070,790 1020,795Z" fill="#3E1CA8" filter="url(#b3)"/>
    <path d="M1030,815L1115,815L1090,860Q1060,860 1030,815Z" fill="#A82AAC" filter="url(#b6)"/>
    <path d="M300,1258C340,1210 400,1215 440,1240L700,1258Z" fill="#A02AAC" filter="url(#b6)"/>
    <path d="M860,1180C950,1220 1100,1240 1170,1258H700Z" fill="#7626B0" filter="url(#b6)"/>
  </g>
</g>

<!-- panel shadow -->
<rect x="1426" y="408" width="714" height="746" fill="#000" opacity=".55" filter="url(#bs)"/>

<!-- floating panel -->
<path d="M1522,437Q1522,424 1535,424H2031Q2044,424 2044,437V1270Q2044,1283 2031,1283H1535Q1522,1283 1522,1270Z" fill="#1a1a1a"/>
<g clip-path="url(#cPanel)">
  <rect x="1523" y="425" width="520" height="857" fill="#333"/>
  <rect x="1523" y="466" width="520" height="15" fill="#252525"/>
  <rect x="1568" y="481" width="4" height="801" fill="#2a2a2a"/>
  <rect x="1568" y="481" width="475" height="33" fill="#272727"/>
  <rect x="1572" y="481" width="54" height="33" fill="#333"/>
  <rect x="1572" y="797" width="471" height="36" fill="#272727"/>
  <rect x="1572" y="800" width="83" height="33" fill="#333"/>
  <rect x="1572" y="1087" width="471" height="36" fill="#272727"/>
  <rect x="1572" y="1090" width="61" height="33" fill="#333"/>
  <!-- dock -->
  <g fill="#292929"><rect x="1524" y="627" width="44" height="2"/><rect x="1524" y="707" width="44" height="2"/><rect x="1524" y="787" width="44" height="2"/><rect x="1524" y="835" width="44" height="2"/></g>
  <rect x="1523" y="837" width="45" height="445" fill="#2f2f2f"/>
  <!-- scroll col -->
  <rect x="2028" y="872" width="15" height="215" fill="#2b2b2b"/>
  <rect x="2032" y="877" width="10" height="61" rx="4" fill="#4a4a4a"/>
  <rect x="1572" y="872" width="456" height="1" fill="#2c2c2c"/>
  <rect x="1572" y="1160" width="471" height="1" fill="#2c2c2c"/>
  <rect x="1572" y="1193" width="471" height="1" fill="#2c2c2c"/>
  <rect x="1572" y="1226" width="471" height="1" fill="#2c2c2c"/>
  <rect x="2028" y="1227" width="15" height="55" fill="#2b2b2b"/>
  <rect x="1608" y="1229" width="420" height="53" fill="#4f4f4f"/>
</g>

<!-- panel top -->
<rect x="1890" y="434" width="63" height="30" rx="15" fill="#1473E6"/>
<text x="1905" y="451.500" font-size="12.500" fill="#fff" textLength="32" lengthAdjust="spacingAndGlyphs">Share</text>
<circle cx="1974" cy="445.500" r="6.800" fill="none" stroke="#e0e0e0" stroke-width="1.500"/><path d="M1979,450.500L1983,454.500" stroke="#e0e0e0" stroke-width="1.800"/>
<rect x="2001" y="441" width="18" height="14" fill="#1f1f1f" stroke="#ddd" stroke-width="1.200"/><rect x="2002" y="442" width="4" height="12" fill="#555"/>
<path d="M2032,445L2035,448L2038,445" fill="none" stroke="#ccc" stroke-width="1.200"/>
<text x="1553" y="478" font-size="10" fill="#c4c4c4">‹‹</text>
<text x="2029" y="478" font-size="10" fill="#c4c4c4">››</text>
<g fill="#3d3d3d"><rect x="1537" y="486" width="20" height="3"/><rect x="1537" y="632" width="20" height="3"/><rect x="1537" y="712" width="20" height="3"/><rect x="1537" y="792" width="20" height="3"/></g>

<use href="#ih" x="1547" y="507"/>
<g transform="translate(1547,540)"><use href="#ip"/></g>
<g transform="translate(1547,574)"><use href="#il"/></g>
<g transform="translate(1547,605)"><use href="#ic"/></g>
<g transform="translate(1547,654)"><use href="#ib"/></g>
<g transform="translate(1547,688)"><use href="#is"/></g>
<text x="1545" y="743" font-size="22" fill="#d2d2d2" text-anchor="middle">A</text>
<rect x="1554" y="726" width="1" height="19" fill="#d2d2d2"/>
<text x="1547" y="776" font-size="20" font-weight="bold" fill="#d2d2d2" text-anchor="middle">¶</text>
<rect x="1538" y="807" width="19" height="16" fill="#d2d2d2"/>
<path d="M1538,812h19M1538,817h19M1543,807v16M1552,807v16" stroke="#333" stroke-width="1.200" stroke-dasharray="2 2"/>

<!-- color tabs -->
<text x="1582.500" y="501.500" font-size="12.500" font-weight="bold" fill="#e8e8e8" textLength="32" lengthAdjust="spacingAndGlyphs">Color</text>
<text x="1637" y="501.500" font-size="12.500" fill="#a8a8a8" textLength="55" lengthAdjust="spacingAndGlyphs">Swatches</text>
<text x="1715" y="501.500" font-size="12.500" fill="#a8a8a8" textLength="58" lengthAdjust="spacingAndGlyphs">Gradients</text>
<text x="1796" y="501.500" font-size="12.500" fill="#a8a8a8" textLength="59" lengthAdjust="spacingAndGlyphs">Navigator</text>
<g transform="translate(2033.500,497) scale(1.150)"><use href="#ih2"/></g>

<!-- picker -->
<rect x="1625" y="522" width="359" height="253" fill="url(#gPickH)"/>
<rect x="1625" y="522" width="359" height="253" fill="url(#gPickV)"/>
<g clip-path="url(#cPick)"><circle cx="1976" cy="523" r="6.500" fill="none" stroke="#fff" stroke-width="1.200"/></g>
<rect x="2004" y="522" width="23" height="253" fill="url(#gHue)"/>
<path d="M1994,624H1998L2001,627.500L1998,631H1994Z" fill="#e8e8e8"/>
<rect x="1595" y="539" width="22" height="21" fill="#fff" stroke="#000" stroke-width="1"/>
<rect x="1581.500" y="525" width="25" height="24" fill="#3b3b3b"/>
<rect x="1583" y="526.500" width="22" height="21" fill="#0D86FF" stroke="#000" stroke-width="1"/>
<rect x="1584" y="527" width="20" height="20" fill="#0D86FF" stroke="#fff" stroke-width=".8"/>
<path d="M1589,581L1596,595H1582Z" fill="#d8d8d8"/><rect x="1588.400" y="585.500" width="1.300" height="5" fill="#333"/><rect x="1588.400" y="591.500" width="1.300" height="1.500" fill="#333"/>
<rect x="1600.500" y="581.500" width="13" height="13" fill="#4A7FCB" stroke="#e8e8e8" stroke-width="1.200"/>

<!-- properties -->
<text x="1582.500" y="820.500" font-size="12.500" font-weight="bold" fill="#e8e8e8" textLength="62" lengthAdjust="spacingAndGlyphs">Properties</text>
<text x="1666" y="820.500" font-size="12.500" fill="#a8a8a8" textLength="76.500" lengthAdjust="spacingAndGlyphs">Adjustments</text>
<text x="1765" y="820.500" font-size="12.500" fill="#a8a8a8" textLength="52.500" lengthAdjust="spacingAndGlyphs">Libraries</text>
<g transform="translate(2033.500,816) scale(1.150)"><use href="#ih2"/></g>
<rect x="1585" y="840" width="26" height="25" rx="1.500" fill="#262626"/>
<path d="M1592,845.500H1600L1604,849.500V859H1592ZM1600,845.500V849.500H1604" fill="none" stroke="#dedede" stroke-width="1.300"/>
<text x="1616" y="857" font-size="12" fill="#b4b4b4" textLength="58" lengthAdjust="spacingAndGlyphs">Document</text>
<path d="M1580,889L1584.500,894L1589,889" fill="none" stroke="#bdbdbd" stroke-width="1.200"/>
<text x="1597" y="895" font-size="12.500" font-weight="bold" fill="#e0e0e0" textLength="43" lengthAdjust="spacingAndGlyphs">Canvas</text>
<text x="1631" y="922" font-size="12" fill="#b4b4b4" textLength="11" lengthAdjust="spacingAndGlyphs">W</text>
<text x="1633" y="950" font-size="12" fill="#b4b4b4" textLength="9" lengthAdjust="spacingAndGlyphs">H</text>
<rect x="1648.500" y="908.500" width="60" height="18" fill="#262626" stroke="#444" stroke-width="1"/>
<rect x="1648.500" y="937" width="60" height="18" fill="#262626" stroke="#444" stroke-width="1"/>
<text x="1652" y="922" font-size="12" fill="#efefef" textLength="45" lengthAdjust="spacingAndGlyphs">5769 px</text>
<text x="1652" y="950.500" font-size="12" fill="#efefef" textLength="45" lengthAdjust="spacingAndGlyphs">3245 px</text>
<text x="1726" y="922" font-size="12" fill="#b4b4b4" textLength="7" lengthAdjust="spacingAndGlyphs">X</text>
<text x="1726" y="950.500" font-size="12" fill="#b4b4b4" textLength="7" lengthAdjust="spacingAndGlyphs">Y</text>
<rect x="1740.500" y="908.500" width="61" height="18" fill="#2b2b2b" stroke="#3f3f3f" stroke-width="1"/>
<rect x="1740.500" y="937" width="61" height="18" fill="#2b2b2b" stroke="#3f3f3f" stroke-width="1"/>
<text x="1744" y="922" font-size="12" fill="#555" textLength="24" lengthAdjust="spacingAndGlyphs">0 px</text>
<text x="1744" y="950.500" font-size="12" fill="#555" textLength="24" lengthAdjust="spacingAndGlyphs">0 px</text>
<g fill="none" stroke="#d8d8d8" stroke-width="1.300"><rect x="1595" y="923" width="7" height="10" rx="3.500"/><rect x="1595" y="930" width="7" height="10" rx="3.500"/></g><rect x="1598" y="927" width="1.200" height="9" fill="#d8d8d8"/>
<rect x="1655.500" y="973.500" width="16" height="18" fill="#262626" stroke="#ddd" stroke-width="1.200"/>
<circle cx="1663.500" cy="979" r="2.500" fill="#ddd"/><path d="M1658.500,991V985Q1658.500,983 1661,983H1666Q1668.500,983 1668.500,985V991Z" fill="#ddd"/>
<rect x="1680" y="969" width="28" height="28" fill="#262626"/>
<rect x="1684.500" y="976.500" width="19" height="13.500" fill="#262626" stroke="#ddd" stroke-width="1.200"/>
<circle cx="1694" cy="980.500" r="2.500" fill="#ddd"/><path d="M1688,990V987Q1688,985 1690,985H1698Q1700,985 1700,987V990Z" fill="#ddd"/>
<text x="1648" y="1021" font-size="12" fill="#b0b0b0" textLength="144" lengthAdjust="spacingAndGlyphs">Resolution: 72 pixels/inch</text>
<text x="1610" y="1052" font-size="12" fill="#a8a8a8" textLength="31" lengthAdjust="spacingAndGlyphs">Mode</text>

<!-- layers -->
<text x="1582.500" y="1110.500" font-size="12.500" font-weight="bold" fill="#e8e8e8" textLength="39" lengthAdjust="spacingAndGlyphs">Layers</text>
<text x="1644" y="1110.500" font-size="12.500" fill="#a8a8a8" textLength="55" lengthAdjust="spacingAndGlyphs">Channels</text>
<text x="1721" y="1110.500" font-size="12.500" fill="#a8a8a8" textLength="33" lengthAdjust="spacingAndGlyphs">Paths</text>
<g transform="translate(2033.500,1106) scale(1.150)"><use href="#ih2"/></g>
<rect x="1577" y="1134" width="101" height="20" rx="2" fill="#2e2e2e"/>
<circle cx="1591" cy="1143" r="4.500" fill="none" stroke="#8c8c8c" stroke-width="1.300"/><path d="M1594,1147L1598,1151" stroke="#8c8c8c" stroke-width="1.400"/>
<text x="1601" y="1148" font-size="12" fill="#7c7c7c" textLength="25" lengthAdjust="spacingAndGlyphs">Kind</text>
<path d="M1667,1143L1671,1147L1675,1143" class="d"/>
<g class="d">
  <rect x="1693.500" y="1139" width="14" height="11"/>
</g>
<path d="M1695,1149L1699,1143L1702,1146L1704,1144L1706.500,1149Z" class="df"/>
<circle cx="1728" cy="1144" r="6" class="d"/><path d="M1728,1138A6,6 0 0 1 1728,1150L1722.500,1146Z" class="df" transform="rotate(30 1728 1144)"/>
<text x="1756" y="1150" font-size="15" font-weight="bold" fill="#8a8a8a" text-anchor="middle" style="font-family:'Liberation Serif',serif">T</text>
<rect x="1778.500" y="1138.500" width="11" height="11" class="d"/><g class="df"><rect x="1777" y="1137" width="3" height="3"/><rect x="1788" y="1137" width="3" height="3"/><rect x="1777" y="1148" width="3" height="3"/><rect x="1788" y="1148" width="3" height="3"/></g>
<path d="M1811,1138H1816L1819,1141V1150H1811Z" class="d"/><rect x="1807.500" y="1143" width="7" height="8" class="df"/>
<rect x="1834.500" y="1136" width="9" height="19" rx="4.500" fill="#2b2b2b"/><circle cx="1839" cy="1139" r="4.500" fill="#8a8a8a"/>

<rect x="1577" y="1167" width="151" height="20" rx="2" fill="#2e2e2e"/>
<text x="1585" y="1181" font-size="12" fill="#7c7c7c" textLength="40" lengthAdjust="spacingAndGlyphs">Normal</text>
<path d="M1717,1176L1721,1180L1725,1176" class="d"/>
<text x="1734" y="1181" font-size="12" fill="#6c6c6c" textLength="46" lengthAdjust="spacingAndGlyphs">Opacity:</text>
<rect x="1784" y="1167" width="42" height="20" fill="#2b2b2b"/><rect x="1827" y="1167" width="16" height="20" fill="#2b2b2b"/>
<text x="1787" y="1181" font-size="12" fill="#5a5a5a" textLength="31" lengthAdjust="spacingAndGlyphs">100%</text>
<path d="M1831,1176L1835,1180L1839,1176" class="d"/>
<text x="1578" y="1214" font-size="12" fill="#6c6c6c" textLength="29" lengthAdjust="spacingAndGlyphs">Lock:</text>
<rect x="1616.500" y="1204" width="12.500" height="12.500" fill="#8a8a8a"/><path d="M1620.700,1204h4.200v4.200h-4.200zM1616.500,1208.200h4.200v4.200h-4.200zM1624.900,1208.200h4.200v4.200h-4.200zM1620.700,1212.400h4.200v4.200h-4.200z" fill="#3a3a3a"/>
<path d="M1649,1211L1656,1201L1657,1202L1652,1213ZM1642,1218Q1643,1211 1647,1211L1650,1214Q1648,1218 1642,1218Z" class="df"/>
<g transform="translate(1674,1210)" class="d"><path d="M-7,0H7M0,-7V7M-2,-5L0,-7L2,-5M-2,5L0,7L2,5M-5,-2L-7,0L-5,2M5,-2L7,0L5,2"/></g>
<g class="d"><path d="M1695,1206H1705L1706,1215H1696ZM1693,1217H1701M1700,1203L1704,1209"/></g>
<rect x="1720.500" y="1208" width="12" height="9.500" class="df"/><path d="M1723,1208V1205A3.500,3.500 0 0 1 1730,1205V1208" class="d"/>
<text x="1761" y="1214" font-size="12" fill="#6c6c6c" textLength="19" lengthAdjust="spacingAndGlyphs">Fill:</text>
<rect x="1784" y="1200" width="42" height="20" fill="#2b2b2b"/><rect x="1827" y="1200" width="16" height="20" fill="#2b2b2b"/>
<text x="1787" y="1214" font-size="12" fill="#5a5a5a" textLength="31" lengthAdjust="spacingAndGlyphs">100%</text>
<path d="M1831,1209L1835,1213L1839,1209" class="d"/>

<!-- layer row -->
<path d="M1583,1261Q1590,1254 1597,1261Q1590,1268 1583,1261Z" fill="#e8e8e8"/><circle cx="1590" cy="1261" r="2.200" fill="#333"/>
<g clip-path="url(#cThumb)">
  <rect x="1612" y="1234" width="94" height="48" fill="url(#gSky)"/>
  <path d="M1612,1262L1640,1256L1655,1248L1668,1246L1680,1250L1706,1252V1272H1612Z" fill="#6a6a60"/>
  <rect x="1612" y="1268" width="94" height="14" fill="#7e7c7a"/>
  <path d="M1612,1234H1640L1612,1252Z" fill="#e6ebea" opacity=".7"/>
  <path d="M1646,1266L1652,1259H1667L1672,1266V1276H1646Z" fill="#B8222C"/>
  <rect x="1650" y="1260" width="18" height="5" fill="#5a1a20"/>
  <rect x="1647" y="1273" width="24" height="4" fill="#3a1015"/>
</g>
<text x="1715" y="1265.500" font-size="12" fill="#e8e8e8" textLength="67.500" lengthAdjust="spacingAndGlyphs">Background</text>
<rect x="1996.500" y="1260" width="11" height="9" fill="none" stroke="#e0e0e0" stroke-width="1.200"/><path d="M1999,1260V1257.500A3,3 0 0 1 2005,1257.500V1260" fill="none" stroke="#e0e0e0" stroke-width="1.200"/><circle cx="2002" cy="1264.500" r="1.200" fill="#e0e0e0"/>
</svg>
</body>
</html>
